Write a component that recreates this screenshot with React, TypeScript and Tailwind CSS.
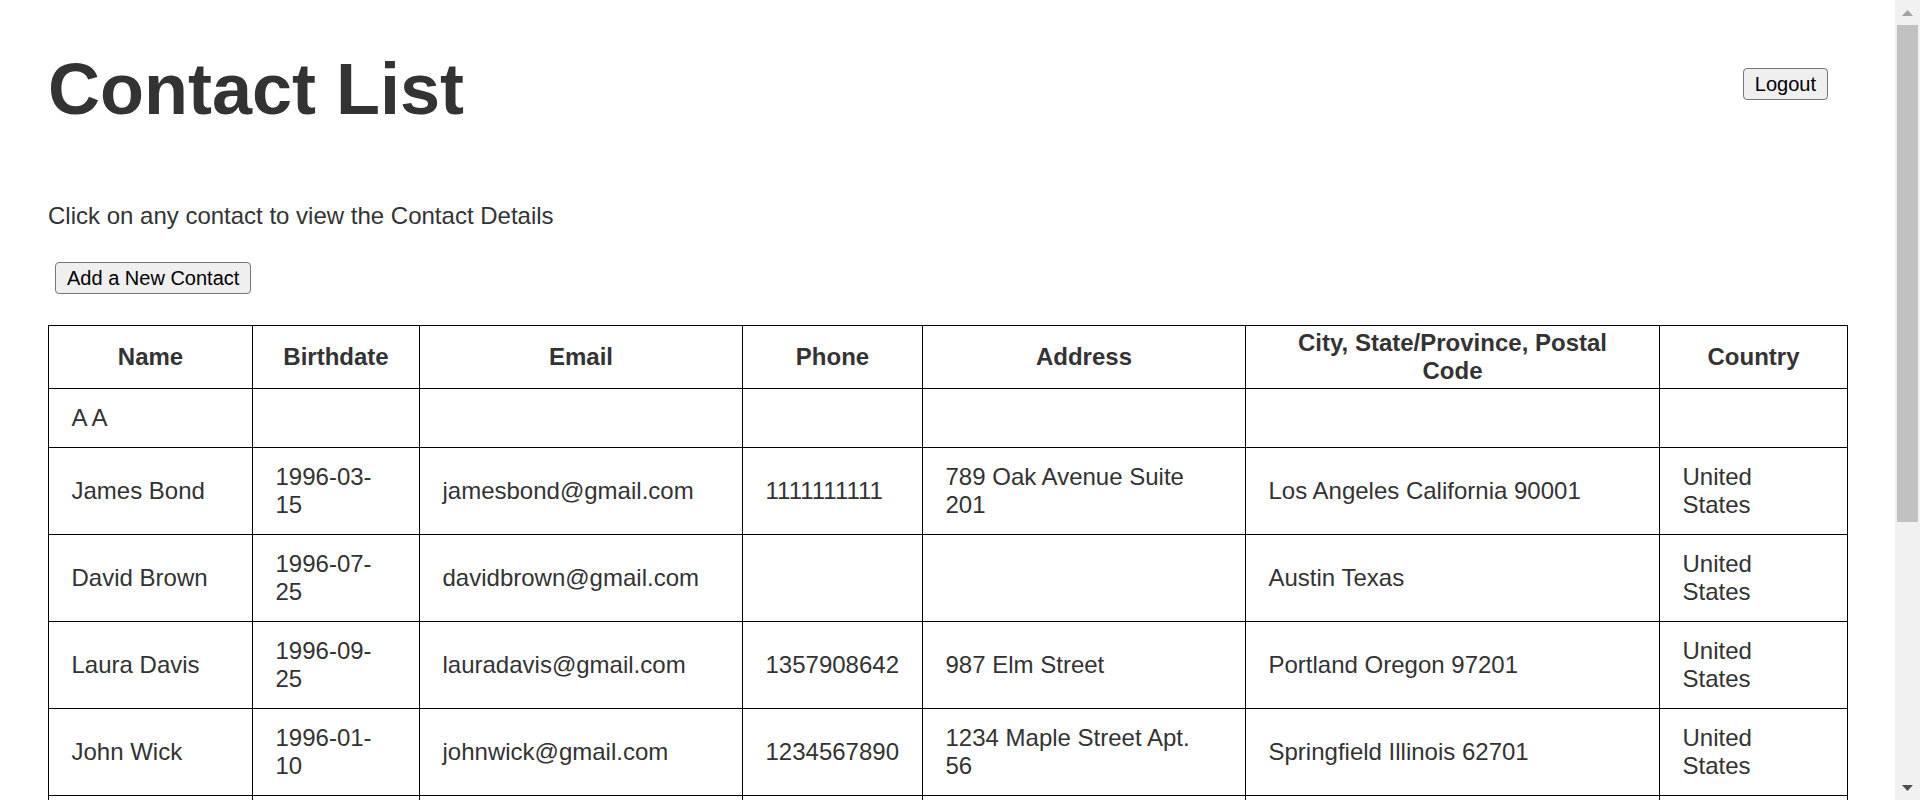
import React from 'react';

const contacts = [
  { name: 'A A', birthdate: '', email: '', phone: '', address: '', city: '', country: '' },
  {
    name: 'James Bond',
    birthdate: '1996-03-15',
    email: 'jamesbond@gmail.com',
    phone: '1111111111',
    address: '789 Oak Avenue Suite 201',
    city: 'Los Angeles California 90001',
    country: 'United States'
  },
  {
    name: 'David Brown',
    birthdate: '1996-07-25',
    email: 'davidbrown@gmail.com',
    phone: '',
    address: '',
    city: 'Austin Texas',
    country: 'United States'
  },
  {
    name: 'Laura Davis',
    birthdate: '1996-09-25',
    email: 'lauradavis@gmail.com',
    phone: '1357908642',
    address: '987 Elm Street',
    city: 'Portland Oregon 97201',
    country: 'United States'
  },
  {
    name: 'John Wick',
    birthdate: '1996-01-10',
    email: 'johnwick@gmail.com',
    phone: '1234567890',
    address: '1234 Maple Street Apt. 56',
    city: 'Springfield Illinois 62701',
    country: 'United States'
  }
];

const headers = [
  { label: 'Name', width: 'w-[204px]' },
  { label: 'Birthdate', width: 'w-[167px]' },
  { label: 'Email', width: 'w-[323px]' },
  { label: 'Phone', width: 'w-[180px]' },
  { label: 'Address', width: 'w-[323px]' },
  { label: 'City, State/Province, Postal Code', width: 'w-[414px]' },
  { label: 'Country', width: 'w-[188px]' }
];

const btn =
  'block rounded-[4px] border border-[#767676] bg-[#efefef] px-[11px] py-[3.5px] text-[20px] leading-[23px] text-black';

// classic browser scrollbar on the right edge of the window
function Scrollbar() {
  return (
    <div className="flex w-[25px] shrink-0 flex-col bg-[#f1f1f1]">
      <div className="flex h-[25px] items-center justify-center">
        <svg width="11" height="6" viewBox="0 0 11 6">
          <path d="M0 6 L5.5 0 L11 6 Z" fill="#a3a3a3" />
        </svg>
      </div>
      <div className="mx-[2px] h-[497px] bg-[#c1c1c1]" />
      <div className="flex-1" />
      <div className="flex h-[25px] items-center justify-center">
        <svg width="11" height="6" viewBox="0 0 11 6">
          <path d="M0 0 L11 0 L5.5 6 Z" fill="#505050" />
        </svg>
      </div>
    </div>
  );
}

export default function App() {
  return (
    <div className="flex h-screen overflow-hidden bg-white font-['Liberation_Sans',Arial,sans-serif] text-[#333]">
      <div className="min-w-0 flex-1 px-12 pt-12">
        <div className="flex items-start justify-between">
          <h1 className="text-[72px] font-bold leading-[83px]">Contact List</h1>
          <button className={`${btn} mt-5 mr-[19px]`}>Logout</button>
        </div>

        <p className="mt-[71px] text-[24px] leading-[28px]">Click on any contact to view the Contact Details</p>

        <button className={`${btn} ml-[7px] mt-[32px]`}>Add a New Contact</button>

        <table className="mt-[31px] w-[1799px] table-fixed border-collapse text-[24px] leading-[28px]">
          <thead>
            <tr>
              {headers.map((h) => (
                <th key={h.label} className={`${h.width} border border-black px-[22.5px] py-[3px] text-center font-bold`}>
                  {h.label}
                </th>
              ))}
            </tr>
          </thead>
          <tbody>
            {contacts.map((c) => (
              <tr key={c.name} className="cursor-pointer">
                {[c.name, c.birthdate, c.email, c.phone, c.address, c.city, c.country].map((v, i) => (
                  <td key={i} className="border border-black px-[22.5px] py-[15px] text-left">
                    {v}
                  </td>
                ))}
              </tr>
            ))}
            {/* more contacts continue below the fold */}
            <tr>
              {headers.map((h) => (
                <td key={h.label} className="h-[87px] border border-black" />
              ))}
            </tr>
          </tbody>
        </table>
      </div>
      <Scrollbar />
    </div>
  );
}
